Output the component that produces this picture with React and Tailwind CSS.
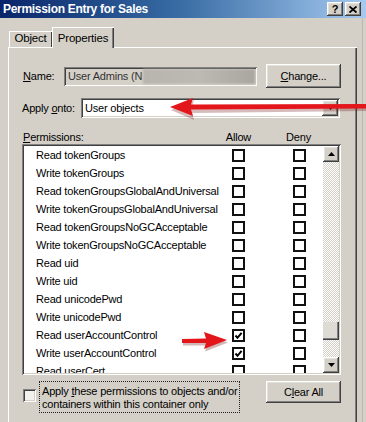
import React from 'react';

const raised =
  'shadow-[inset_-1px_-1px_#404040,inset_1px_1px_#ffffff,inset_-2px_-2px_#808080,inset_2px_2px_#e4e1da]';
const sunken =
  'shadow-[inset_1px_1px_#808080,inset_-1px_-1px_#ffffff,inset_2px_2px_#404040,inset_-2px_-2px_#d4d0c8]';

const rows = [
  ['Read tokenGroups', false],
  ['Write tokenGroups', false],
  ['Read tokenGroupsGlobalAndUniversal', false],
  ['Write tokenGroupsGlobalAndUniversal', false],
  ['Read tokenGroupsNoGCAcceptable', false],
  ['Write tokenGroupsNoGCAcceptable', false],
  ['Read uid', false],
  ['Write uid', false],
  ['Read unicodePwd', false],
  ['Write unicodePwd', false],
  ['Read userAccountControl', true],
  ['Write userAccountControl', true],
  ['Read userCert', false],
];

function Box({ checked }) {
  return (
    <div className="w-[13px] h-[13px] border-2 border-[#111] bg-white flex items-center justify-center shrink-0">
      {checked && (
        <svg width="9" height="9" viewBox="0 0 9 9">
          <path d="M1.5 4.5 L3.5 6.8 L7.6 1.8" stroke="#000" strokeWidth="2" fill="none" />
        </svg>
      )}
    </div>
  );
}

function ArrowUp() {
  return (
    <svg width="7" height="4" viewBox="0 0 7 4">
      <path d="M3.5 0 L7 4 L0 4 Z" fill="#000" />
    </svg>
  );
}

function ArrowDown() {
  return (
    <svg width="7" height="4" viewBox="0 0 7 4">
      <path d="M0 0 L7 0 L3.5 4 Z" fill="#000" />
    </svg>
  );
}

export default function App() {
  return (
    <div
      className="relative w-[366px] h-[422px] overflow-hidden bg-[#d4d0c8] flex flex-col text-black text-[11px] tracking-[-0.2px]"
      style={{ fontFamily: '"Liberation Sans", Arial, sans-serif' }}
    >
      {/* title bar */}
      <div className="h-[18px] shrink-0 flex items-center bg-linear-to-r from-[#0a246a] via-[#3a6ea5] to-[#a6caf0] pl-[3px] pr-[5px]">
        <span className="text-white font-bold text-[12px] tracking-[-0.3px]">Permission Entry for Sales</span>
        <div className="ml-auto flex gap-[2px]">
          <div className={`w-[16px] h-[14px] bg-[#d4d0c8] ${raised} flex items-center justify-center font-bold text-[11px] leading-none`}>
            ?
          </div>
          <div className={`w-[16px] h-[14px] bg-[#d4d0c8] ${raised} flex items-center justify-center`}>
            <svg width="8" height="7" viewBox="0 0 8 7">
              <path d="M0.5 0.5 L7.5 6.5 M7.5 0.5 L0.5 6.5" stroke="#000" strokeWidth="1.8" />
            </svg>
          </div>
        </div>
      </div>

      {/* tabs */}
      <div className="relative z-10 mt-[9px] ml-[8px] h-[21px] -mb-[1px] flex items-end shrink-0">
        <div className="ml-[1px] mb-[1px] w-[43px] h-[16px] shadow-[inset_1px_1px_#ffffff,inset_-1px_0_#404040] flex items-center justify-center text-[11.5px]">
          Object
        </div>
        <div className="w-[62px] h-[21px] bg-[#d4d0c8] shadow-[inset_1px_1px_#ffffff,inset_-1px_0_#404040,inset_-2px_0_#808080] flex items-start justify-center pt-[3px] text-[11.5px]">
          Properties
        </div>
      </div>

      {/* panel */}
      <div className="ml-[8px] w-[349px] flex-1 shadow-[inset_1px_1px_#ffffff,inset_-1px_0_#404040,inset_-2px_0_#808080] pl-[14px] pt-[17px]">
        {/* name */}
        <div className="flex items-center h-[24px]">
          <span className="ml-[1px] w-[41px]">
            <span className="underline">N</span>ame:
          </span>
          <div className={`w-[193px] h-[19px] bg-[#d4d0c8] ${sunken} flex items-center pl-[4px] overflow-hidden`}>
            <span className="text-[#333] whitespace-nowrap">User Admins (N</span>
            <div className="ml-[1px] h-[15px] flex-1 mr-[2px] bg-linear-to-r from-[#b8b5ae] via-[#bdbab4] to-[#a9a6a0] blur-[1px]" />
          </div>
          <div className={`ml-[9px] w-[75px] h-[24px] bg-[#d4d0c8] ${raised} flex items-center justify-center`}>
            <span>
              <span className="underline">C</span>hange...
            </span>
          </div>
        </div>

        {/* apply onto */}
        <div className="flex items-center h-[20px] mt-[10px]">
          <span className="w-[59px]">
            Apply <span className="underline">o</span>nto:
          </span>
          <div className={`w-[259px] h-[20px] bg-white ${sunken} flex items-center pl-[4px] pr-[2px]`}>
            <span>User objects</span>
            <div className={`ml-auto w-[16px] h-[16px] bg-[#d4d0c8] ${raised} flex items-center justify-center`}>
              <ArrowDown />
            </div>
          </div>
        </div>

        {/* header */}
        <div className="flex items-center h-[14px] mt-[12px] w-[319px]">
          <span className="ml-[1px]">
            <span className="underline">P</span>ermissions:
          </span>
          <span className="ml-auto mr-[35px]">Allow</span>
          <span className="mr-[30px]">Deny</span>
        </div>

        {/* list */}
        <div className={`w-[319px] h-[231px] bg-white ${sunken} p-[2px] flex`}>
          <div className="flex-1 overflow-hidden">
            {rows.map(([label, checked]) => (
              <div key={label} className="h-[18px] flex items-center">
                <span className="w-[208px] pl-[12px] whitespace-nowrap">{label}</span>
                <Box checked={checked} />
                <div className="ml-[48px]">
                  <Box checked={false} />
                </div>
              </div>
            ))}
          </div>
          <div className="w-[16px] flex flex-col">
            <div className={`h-[16px] bg-[#d4d0c8] ${raised} flex items-center justify-center`}>
              <ArrowUp />
            </div>
            <div className="flex-1 bg-[image:repeating-conic-gradient(#ffffff_0_25%,#d4d0c8_0_50%)] bg-[length:2px_2px]">
              <div className="mt-[160px] h-[18px] bg-[#dedbd4] shadow-[inset_-1px_-1px_#404040,inset_-2px_-2px_#808080]" />
            </div>
            <div className={`h-[16px] bg-[#d4d0c8] ${raised} flex items-center justify-center`}>
              <ArrowDown />
            </div>
          </div>
        </div>

        {/* bottom */}
        <div className="flex items-start mt-[6px] w-[319px]">
          <div className={`ml-[1px] mt-[8px] w-[13px] h-[13px] bg-[#f2f1ee] ${sunken}`} />
          <div className="ml-[3px] w-[201px] h-[32px] border border-dotted border-[#222] pl-[2px] pt-[3px] leading-[13px]">
            <div>
              Apply <span className="underline">t</span>hese permissions to objects and/or
            </div>
            <div>containers within this container only</div>
          </div>
          <div className={`ml-auto w-[75px] h-[22px] bg-[#d4d0c8] ${raised} flex items-center justify-center`}>
            <span>
              C<span className="underline">l</span>ear All
            </span>
          </div>
        </div>
      </div>

      {/* window edge on the right */}
      <div className="absolute right-[3px] top-[18px] bottom-0 w-[1px] bg-[#bcb8b0]" />

      {/* red arrow at Apply onto */}
      <svg className="absolute left-[165px] top-[95px]" width="201" height="26" viewBox="0 0 201 26">
        <path d="M5 13 L28 3 L26 10 L201 9 L201 14 L26 16 L28 23 Z" fill="#7a1a1a" opacity="0.3" transform="translate(1 2)" />
        <path d="M5 12 L28 3 L26 9.5 L201 9 L201 13.5 L26 14.5 L28 21 Z" fill="#e3161c" />
      </svg>

      {/* red arrow at userAccountControl */}
      <svg className="absolute left-[180px] top-[330px]" width="50" height="22" viewBox="0 0 50 22">
        <path d="M2 10 L26 9.5 L24 3 L47 11 L24 20 L26 14 L2 14 Z" fill="#6a1010" opacity="0.3" transform="translate(1 1.5)" />
        <path d="M2 9 L26 8.5 L24 2 L47 10 L24 19 L26 13 L2 13 Z" fill="#e3161c" />
      </svg>
    </div>
  );
}
